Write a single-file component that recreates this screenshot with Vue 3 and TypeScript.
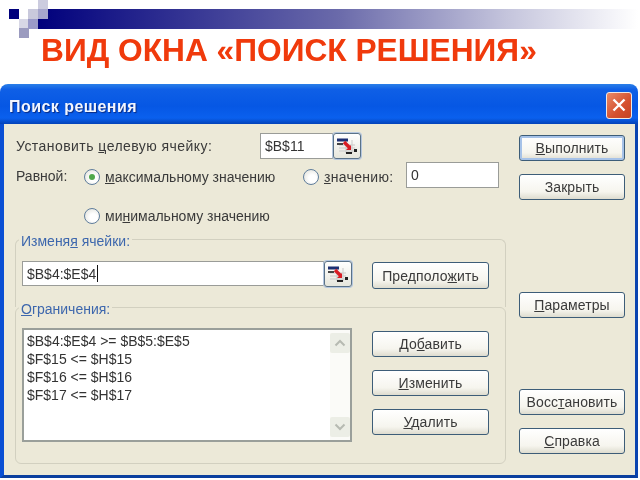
<script setup lang="ts">
const constraints = ['$B$4:$E$4 >= $B$5:$E$5', '$F$15 <= $H$15', '$F$16 <= $H$16', '$F$17 <= $H$17']
const squares = [
  { left: 9, top: 9, color: '#00007c' },
  { left: 28, top: 9, color: '#c9c9dc' },
  { left: 38, top: 0, color: '#ccccdf' },
  { left: 38, top: 9, color: '#a6a6cc' },
  { left: 19, top: 19, color: '#d8d8e6' },
  { left: 28, top: 19, color: '#9a9ac8' },
  { left: 19, top: 28, color: '#9b9bbf' },
]
</script>

<template>
  <div class="slide">
    <div class="deco">
      <span
        v-for="s in squares"
        :key="`${s.left}-${s.top}`"
        class="square"
        :style="{ left: `${s.left}px`, top: `${s.top}px`, background: s.color }"
      ></span>
    </div>
    <div class="band"></div>
    <h1 class="heading">ВИД ОКНА «ПОИСК РЕШЕНИЯ»</h1>

    <div class="window">
      <div class="titlebar">
        <span class="title">Поиск решения</span>
        <span class="close">
          <svg width="16" height="16" viewBox="0 0 16 16">
            <path d="M2.500 2.500 13.500 13.500M13.500 2.500 2.500 13.500" stroke="#fff" stroke-width="2.400" fill="none" />
          </svg>
        </span>
      </div>

      <div class="dialog">
        <div class="main">
          <div class="row target">
            <span class="target-label">Установить <u>ц</u>елевую ячейку:</span>
            <span class="field target-field">$B$11</span>
            <span class="ref">
              <svg width="22" height="18" viewBox="0 0 22 18">
                <path d="M3 8h16M3 11h16M3 14h16M10 3v13M16 3v13" stroke="#c9c9c9" stroke-width="1" />
                <path d="M1 1.500h11v3H1z" fill="#1c2f73" />
                <path d="M1 6h6v2H1z" fill="#444" />
                <path d="M8 5 14 11" stroke="#d81c24" stroke-width="3.400" />
                <path d="M10 13h5V8z" fill="#d81c24" />
                <path d="M10 15h6v2h-6zM18 12h3v3h-3z" fill="#222" />
              </svg>
            </span>
          </div>

          <div class="row equal">
            <span class="equal-label">Равной:</span>
            <label class="radio checked"><u>м</u>аксимальному значению</label>
            <label class="radio second"><u>з</u>начению:</label>
            <span class="field value-field">0</span>
          </div>

          <div class="row minimum">
            <label class="radio">ми<u>н</u>имальному значению</label>
          </div>

          <section class="group first">
            <div class="legend">Изменя<u>я</u> ячейки:</div>
            <div class="group-row">
              <span class="field cells-field">$B$4:$E$4<i class="caret"></i></span>
              <span class="ref">
                <svg width="22" height="18" viewBox="0 0 22 18">
                  <path d="M3 8h16M3 11h16M3 14h16M10 3v13M16 3v13" stroke="#c9c9c9" stroke-width="1" />
                  <path d="M1 1.500h11v3H1z" fill="#1c2f73" />
                  <path d="M1 6h6v2H1z" fill="#444" />
                  <path d="M8 5 14 11" stroke="#d81c24" stroke-width="3.400" />
                  <path d="M10 13h5V8z" fill="#d81c24" />
                  <path d="M10 15h6v2h-6zM18 12h3v3h-3z" fill="#222" />
                </svg>
              </span>
              <button class="btn guess">Предполо<u>ж</u>ить</button>
            </div>
          </section>

          <section class="group second-group">
            <div class="legend"><u>О</u>граничения:</div>
            <div class="group-row">
              <div class="list">
                <div class="lines">
                  <div v-for="c in constraints" :key="c">{{ c }}</div>
                </div>
                <div class="scroll">
                  <span class="arrow">
                    <svg width="12" height="8" viewBox="0 0 12 8"><path d="M1.500 6.500 6 2l4.500 4.500" stroke="#b6bab2" stroke-width="2" fill="none" /></svg>
                  </span>
                  <span class="arrow">
                    <svg width="12" height="8" viewBox="0 0 12 8"><path d="M1.500 1.500 6 6l4.500-4.500" stroke="#b6bab2" stroke-width="2" fill="none" /></svg>
                  </span>
                </div>
              </div>
              <div class="list-buttons">
                <button class="btn">До<u>б</u>авить</button>
                <button class="btn"><u>И</u>зменить</button>
                <button class="btn"><u>У</u>далить</button>
              </div>
            </div>
          </section>
        </div>

        <div class="side">
          <button class="btn default"><u>В</u>ыполнить</button>
          <button class="btn close-btn">Закрыть</button>
          <button class="btn params"><u>П</u>араметры</button>
          <button class="btn restore">Восс<u>т</u>ановить</button>
          <button class="btn help-btn"><u>С</u>правка</button>
        </div>
      </div>
    </div>
  </div>
</template>

<style scoped>
.slide {
  position: relative;
  width: 640px;
  height: 480px;
  overflow: hidden;
  background: #fff;
  font-family: "Liberation Sans", Arial, sans-serif;
  color: #3a3a3a;
  filter: blur(0.45px);
}

.deco {
  position: absolute;
  inset: 0 auto auto 0;
  width: 50px;
  height: 40px;
  z-index: 1;
}

.square {
  position: absolute;
  width: 10px;
  height: 10px;
}

.band {
  height: 20px;
  margin: 9px 0 0 38px;
  width: 600px;
  background: linear-gradient(90deg, #00007c 0%, #1a1a88 12%, #6a6aaa 50%, #c4c4dc 78%, #fff 100%);
}

.heading {
  margin: 0;
  height: 55px;
  padding-left: 41px;
  font: bold 31.700px/43px "Liberation Sans", Arial, sans-serif;
  color: #f03a0c;
  white-space: nowrap;
}

.window {
  width: 638px;
  height: 394px;
  display: flex;
  flex-direction: column;
  border-radius: 8px 8px 0 0;
  overflow: hidden;
}

.titlebar {
  height: 40px;
  display: flex;
  align-items: center;
  justify-content: space-between;
  padding: 2px 6px 0 9px;
  box-sizing: border-box;
  background: linear-gradient(180deg, #2a7fe8 0%, #0f5fe6 14%, #0657e4 55%, #0a60ee 85%, #0342b8 100%);
}

.title {
  margin-top: 3px;
  font: bold 16px "Liberation Sans", sans-serif;
  letter-spacing: 0.45px;
  color: #f2f6ff;
  text-shadow: 1px 1px 1px #0a2a80;
}

.close {
  width: 26px;
  height: 27px;
  box-sizing: border-box;
  display: flex;
  align-items: center;
  justify-content: center;
  border: 1px solid #f0e8e4;
  border-radius: 3px;
  background: linear-gradient(135deg, #e88a68, #d5502e 60%, #c34324);
}

.dialog {
  flex: 1;
  display: flex;
  padding-left: 11px;
  background: #ece9d8;
  border-style: solid;
  border-color: #0a4fd4 #0b44b0 #0b3f9e #0a4fd4;
  border-width: 0 3px 3px 4px;
  font-size: 14px;
  line-height: 18px;
}

.main {
  width: 491px;
  flex-shrink: 0;
}

.row {
  display: flex;
  align-items: center;
  height: 26px;
}

.target {
  margin-top: 9px;
}

.target-label {
  width: 245px;
  padding-left: 1px;
  box-sizing: border-box;
  letter-spacing: 0.45px;
}

.field {
  display: flex;
  align-items: center;
  height: 100%;
  padding-left: 4px;
  background: #fff;
  border: 1px solid #9a9c98;
  box-sizing: border-box;
  color: #333;
  flex-shrink: 0;
}

.target-field {
  width: 73px;
}

.ref {
  width: 28px;
  height: 26px;
  box-sizing: border-box;
  flex-shrink: 0;
  display: flex;
  align-items: center;
  justify-content: center;
  background: linear-gradient(180deg, #fff, #e6e6dc);
  border: 1px solid #5a7288;
  border-radius: 3px;
  box-shadow: 0 0 0 1px #b4c6de;
}

.equal {
  margin-top: 3px;
}

.equal-label {
  width: 69px;
  padding-left: 1px;
  box-sizing: border-box;
  flex-shrink: 0;
  margin-top: 1px;
}

.radio {
  position: relative;
  padding-left: 21px;
  box-sizing: border-box;
  white-space: nowrap;
  margin-top: 3px;
}

.radio::before {
  content: "";
  position: absolute;
  left: 0;
  top: 1px;
  width: 14px;
  height: 14px;
  border: 1px solid #5f7d9c;
  border-radius: 50%;
  background: radial-gradient(circle at 60% 60%, #fff 30%, #dcdcd4);
}

.radio.checked {
  width: 219px;
}

.radio.checked::after {
  content: "";
  position: absolute;
  left: 5px;
  top: 6px;
  width: 6px;
  height: 6px;
  border-radius: 50%;
  background: #4fa84a;
}

.radio.second {
  width: 103px;
  letter-spacing: 0.3px;
}

.value-field {
  width: 93px;
}

.minimum {
  margin-top: 15px;
  padding-left: 69px;
}

.minimum .radio {
  margin-top: 0;
}

.group {
  box-sizing: border-box;
  border: 1px solid #d2d0c0;
}

.first {
  height: 68px;
  margin-top: 10px;
  border-bottom: none;
  border-radius: 6px 6px 0 0;
}

.second-group {
  height: 157px;
  border-radius: 6px;
}

.legend {
  display: table;
  margin: -8px 0 0 3px;
  padding: 0 2px;
  background: #ece9d8;
  color: #3d67ad;
}

.group-row {
  display: flex;
  align-items: flex-start;
  padding-left: 6px;
}

.first .group-row {
  margin-top: 11px;
}

.second-group .group-row {
  margin-top: 10px;
}

.cells-field {
  width: 302px;
  height: 25px;
}

.caret {
  width: 1px;
  height: 17px;
  margin-left: 1px;
  background: #111;
}

.btn {
  display: block;
  box-sizing: border-box;
  width: 106px;
  height: 26px;
  padding: 0;
  font: inherit;
  letter-spacing: 0.1px;
  color: #3a3a3a;
  white-space: nowrap;
  background: linear-gradient(180deg, #fff 0%, #f6f5ee 70%, #dedccf 100%);
  border: 1px solid #3d5d78;
  border-radius: 3px;
}

.guess {
  width: 117px;
  height: 27px;
  margin: 1px 0 0 20px;
}

.list {
  width: 330px;
  height: 114px;
  display: flex;
  box-sizing: border-box;
  background: #fff;
  border: 2px solid #9a9f9a;
}

.lines {
  flex: 1;
  padding: 2px 0 0 3px;
  color: #333;
}

.scroll {
  width: 20px;
  display: flex;
  flex-direction: column;
  justify-content: space-between;
  padding: 3px 0;
  background: #fbfbf8;
}

.arrow {
  height: 20px;
  display: flex;
  align-items: center;
  justify-content: center;
  background: #eceee6;
  border-radius: 2px;
}

.list-buttons {
  display: flex;
  flex-direction: column;
  gap: 13px;
  margin: 3px 0 0 20px;
}

.list-buttons .btn {
  width: 117px;
}

.side {
  width: 106px;
  margin-left: 13px;
}

.default {
  margin-top: 11px;
  box-shadow: inset 0 0 0 2px #a6c2e8;
}

.close-btn {
  margin-top: 13px;
}

.params {
  margin-top: 92px;
}

.restore {
  margin-top: 71px;
}

.help-btn {
  margin-top: 13px;
}
</style>
